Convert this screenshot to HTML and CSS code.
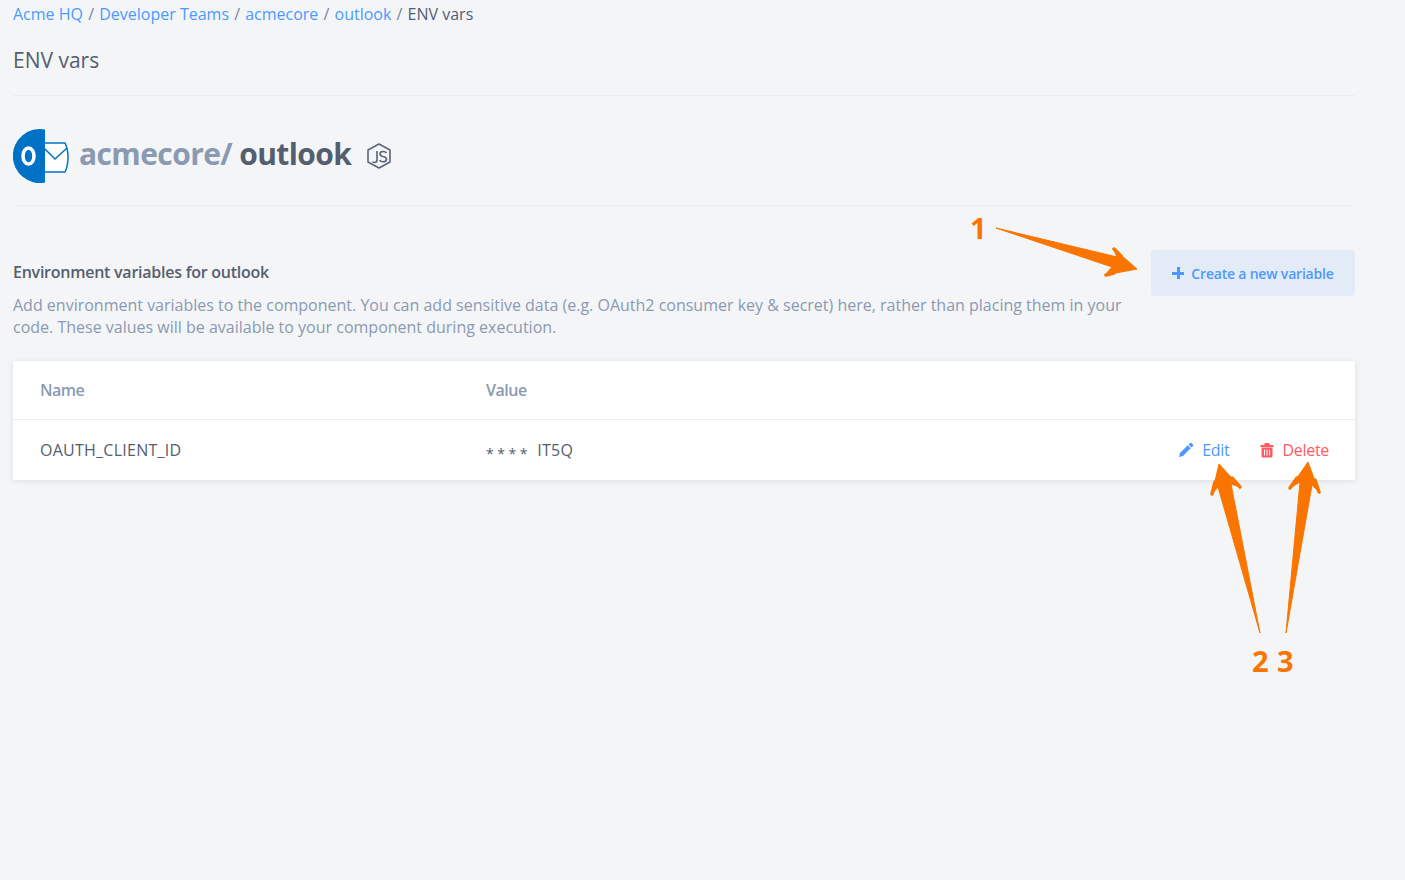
FILE: index.html
```html
<!DOCTYPE html>
<html lang="en">
<head>
    <meta charset="UTF-8"/>
    <title>ENV vars</title>
    <link rel="stylesheet" href="styles.css">
</head>
<body>
<div class="page">
    <nav class="breadcrumb">
        <a href="#">Acme HQ</a> <span class="sep">/</span>
        <a href="#">Developer Teams</a> <span class="sep">/</span>
        <a href="#">acmecore</a> <span class="sep">/</span>
        <a href="#">outlook</a> <span class="sep">/</span>
        <span>ENV vars</span>
    </nav>
    <h2 class="page-title">ENV vars</h2>

    <div class="repo-head">
        <svg class="repo-logo" width="56" height="56" viewBox="0 0 56 56">
            <path d="M32 1.500 A27 27 0 1 0 32 54.500 Z" fill="#0072c6"/>
            <path d="M32 15 H52 Q55 21 55 29 Q55 38 52 44 H32" fill="#fff" stroke="#0072c6" stroke-width="1.500"/>
            <path d="M32 21 L42 31 L54 20" fill="none" stroke="#0072c6" stroke-width="1.500"/>
            <ellipse cx="15.500" cy="28" rx="5.500" ry="8" fill="none" stroke="#fff" stroke-width="3.500"/>
        </svg>
        <h1 class="repo-name"><span class="repo-owner">acmecore/</span> outlook</h1>
        <svg class="repo-lang" width="26" height="28" viewBox="0 0 26 28">
            <path d="M13 2 L24 8 V20 L13 26 L2 20 V8 Z" fill="none" stroke="#5a6579" stroke-width="1.600" stroke-linejoin="round"/>
            <path d="M11 9 V18 Q11 20.500 8.500 20.500 Q7 20.500 6.500 19.500" fill="none" stroke="#5a6579" stroke-width="1.600"/>
            <path d="M20.500 11 Q19.500 9.500 17 9.500 Q14 9.500 14 12 Q14 14 17 14.500 Q20.500 15 20.500 17.200 Q20.500 19.800 17 19.800 Q14.500 19.800 13.700 18" fill="none" stroke="#5a6579" stroke-width="1.600"/>
        </svg>
    </div>

    <section class="intro">
        <div class="intro-text">
            <h3>Environment variables for outlook</h3>
            <p>Add environment variables to the component. You can add sensitive data (e.g. OAuth2 consumer key &amp; secret) here, rather than placing them in your code. These values will be available to your component during execution.</p>
        </div>
        <button class="btn-create"><span class="plus"></span>Create a new variable</button>
    </section>

    <div class="card">
        <div class="row head">
            <div class="col-name">Name</div>
            <div class="col-value">Value</div>
        </div>
        <div class="row">
            <div class="col-name">OAUTH_CLIENT_ID</div>
            <div class="col-value"><span class="mask">****</span> IT5Q</div>
            <div class="actions">
                <a class="edit" href="#">
                    <svg width="16" height="16" viewBox="0 0 16 16"><path d="M12 1 Q12.700 .500 13.400 1 L15 2.600 Q15.500 3.300 15 4 L13.500 5.500 L10.500 2.500 Z M9.700 3.300 L12.700 6.300 L5 14 L1 15 L2 11 Z" fill="#4c9aff"/></svg>
                    Edit
                </a>
                <a class="delete" href="#">
                    <svg width="14" height="16" viewBox="0 0 14 16"><path d="M5 1 H9 L10 3 H13.500 V5 H.500 V3 H4 Z" fill="#ff5a5f"/><path d="M1.500 5.500 H12.500 V14 Q12.500 15.500 11 15.500 H3 Q1.500 15.500 1.500 14 Z M4 7.500 V13.500 H5 V7.500 Z M6.500 7.500 V13.500 H7.500 V7.500 Z M9 7.500 V13.500 H10 V7.500 Z" fill="#ff5a5f" fill-rule="evenodd"/></svg>
                    Delete
                </a>
            </div>
        </div>
    </div>
</div>

<!-- annotations drawn on top of the screenshot -->
<svg class="arrows" width="1405" height="880" viewBox="0 0 1405 880">
    <g fill="#f97500" stroke="#f97500" stroke-width="1" stroke-linejoin="round">
        <path d="M996 228 L1117 257 L1113 248 L1137 269 L1105 275 L1112 267 Z"/>
        <path d="M1260 633 L1218 487 L1212 494 L1219 464 L1240 487 L1231 484 Z"/>
        <path d="M1286 633 L1300 482 L1290 488 L1308 462 L1319 492 L1312 485 Z"/>
    </g>
    <g fill="none" stroke="#f97500" stroke-width="3.500" stroke-linecap="round">
        <path d="M1114 249 L1121 256"/>
        <path d="M1106 275 L1114 273"/>
        <path d="M1212 494 L1215 482"/>
        <path d="M1240 487 L1232 478"/>
        <path d="M1290 488 L1297 478"/>
        <path d="M1319 492 L1315 480"/>
    </g>
    <g class="arrow-labels">
        <text x="970" y="239">1</text>
        <text x="1252" y="672">2</text>
        <text x="1277" y="672">3</text>
    </g>
</svg>
</body>
</html>
```

FILE: styles.css
```css
* {
    margin: 0;
    padding: 0;
    box-sizing: border-box
}

body {
    font-family: "Open Sans", "Noto Sans", sans-serif;
    background: #f4f5f7;
    color: #505f79;
    min-height: 880px;
    position: relative;
    overflow: hidden
}

a {
    text-decoration: none;
    color: #4c9aff
}

.page {
    width: 1342px;
    margin-left: 13px
}

.breadcrumb {
    font-size: 16px;
    line-height: 20px;
    padding-top: 4px;
    white-space: nowrap
}

.sep {
    color: #7a869a;
    margin: 0 1px
}

.page-title {
    font-size: 21px;
    font-weight: 400;
    line-height: 28px;
    margin-top: 22px;
    padding-bottom: 21px;
    border-bottom: 1px solid #ebecf0;
    color: #555e6e
}

.repo-head {
    display: flex;
    align-items: center;
    height: 110px;
    padding-top: 11px;
    border-bottom: 1px solid #ebecf0
}

.repo-logo {
    margin-right: 10px
}

.repo-name {
    font-size: 30px;
    font-weight: 700;
    letter-spacing: -.6px;
    color: #555e6e;
    margin-top: -6px
}

.repo-owner {
    color: #8a9ab2
}

.repo-lang {
    margin-left: 15px
}

.intro {
    display: flex;
    justify-content: space-between;
    align-items: flex-start;
    margin-top: 44px
}

.intro-text {
    width: 1125px
}

.intro h3 {
    font-size: 16px;
    line-height: 22px;
    font-weight: 600;
    letter-spacing: -.25px;
    margin-top: 11px;
    color: #555e6e
}

.intro p {
    font-size: 16px;
    line-height: 22px;
    margin-top: 11px;
    color: #8a9ab2
}

.btn-create {
    width: 204px;
    height: 46px;
    background: #e3ebf6;
    border: none;
    border-radius: 4px;
    color: #4c9aff;
    font-family: inherit;
    font-size: 14px;
    font-weight: 600;
    letter-spacing: -.2px;
    display: flex;
    align-items: center;
    justify-content: center;
    gap: 7px
}

.plus {
    width: 12px;
    height: 12px;
    background:
        linear-gradient(#4c9aff, #4c9aff) center / 12px 3px no-repeat,
        linear-gradient(#4c9aff, #4c9aff) center / 3px 12px no-repeat
}

.card {
    margin-top: 23px;
    background: #fff;
    border-radius: 2px;
    box-shadow: 0 1px 6px rgba(9, 30, 66, .1)
}

.row {
    display: flex;
    align-items: center;
    height: 60px;
    padding: 0 26px 0 27px;
    font-size: 16px;
    letter-spacing: .25px;
    color: #555e6e
}

.row.head {
    height: 59px;
    border-bottom: 1px solid #ebecf0;
    color: #8a9ab2;
    font-weight: 600;
    letter-spacing: -.5px
}

.col-name {
    width: 446px
}

.col-value {
    flex: 1
}

.mask {
    font-size: 14px;
    letter-spacing: 3.500px;
    margin-right: 2px;
    position: relative;
    top: 3px
}

.actions {
    display: flex;
    gap: 31px;
    letter-spacing: -.3px
}

.actions a {
    display: flex;
    align-items: center;
    gap: 8px
}

.delete {
    color: #ff5a5f
}

.arrows {
    position: absolute;
    left: 0;
    top: 0;
    pointer-events: none
}

.arrow-labels text {
    font-family: "Open Sans", sans-serif;
    font-size: 29px;
    font-weight: 700;
    fill: #f97500
}
```
